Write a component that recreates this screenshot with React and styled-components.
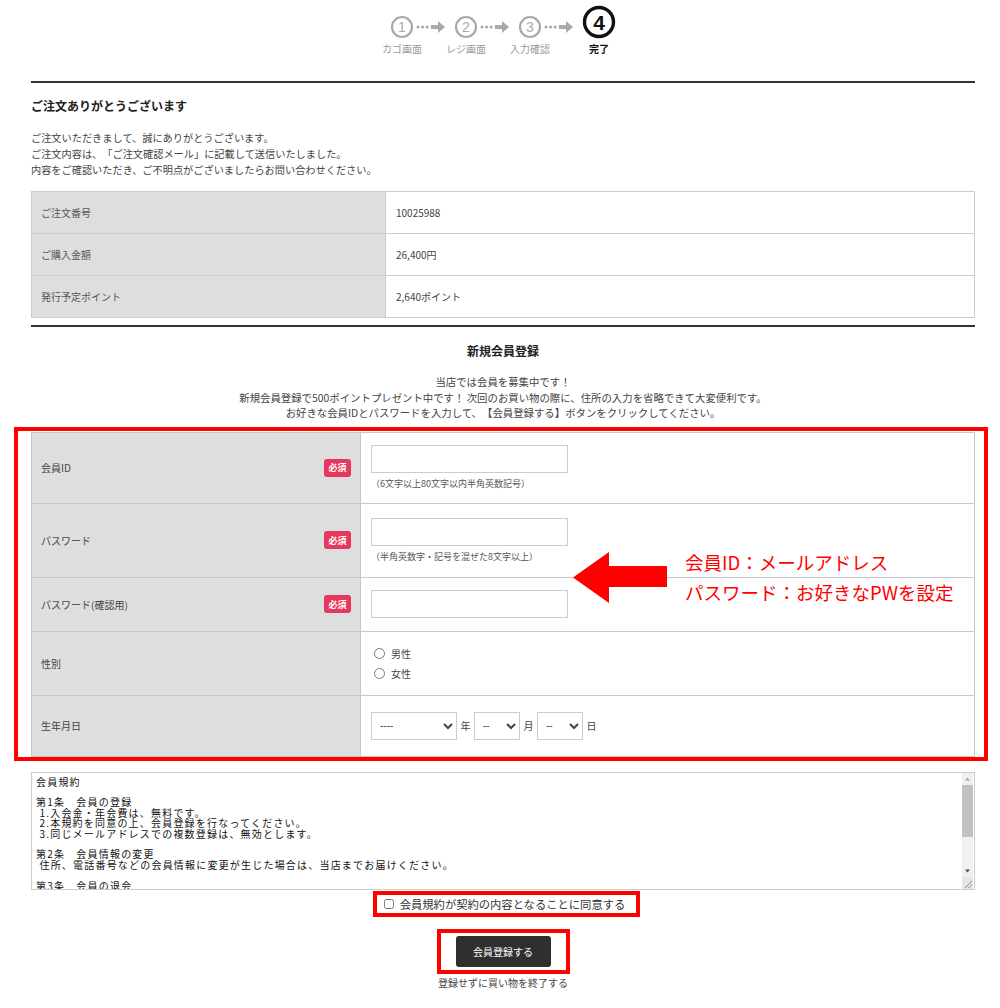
import styled, { createGlobalStyle } from "styled-components";

const GlobalStyle = createGlobalStyle`
  body {
    margin: 0;
    background: #fff;
    color: #333;
    font-family: "Noto Sans CJK JP", "Noto Sans", sans-serif;
    text-spacing-trim: space-all;
  }
`;

const steps = [
  { no: "1", label: "カゴ画面" },
  { no: "2", label: "レジ画面" },
  { no: "3", label: "入力確認" },
  { no: "4", label: "完了", active: true },
];

const orderInfo = [
  { label: "ご注文番号", value: "10025988" },
  { label: "ご購入金額", value: "26,400円" },
  { label: "発行予定ポイント", value: "2,640ポイント" },
];

const terms = `会員規約

第1条　会員の登録
 1.入会金・年会費は、無料です。
 2.本規約を同意の上、会員登録を行なってください。
 3.同じメールアドレスでの複数登録は、無効とします。

第2条　会員情報の変更
 住所、電話番号などの会員情報に変更が生じた場合は、当店までお届けください。

第3条　会員の退会
 会員が退会を希望する場合には、当店宛てにメールにて退会手続きを行ってください。退会手続きの終了後、退会となります。
`;

const StepCircle = ({ no, active }) =>
  active ? (
    <svg width="34" height="38" viewBox="0 0 34 38">
      <circle cx="17" cy="17" r="14.5" fill="none" stroke="#111" strokeWidth="3.4" />
      <text x="17" y="24.5" textAnchor="middle" fontSize="21" fontWeight="bold" fill="#111" fontFamily="Liberation Sans, sans-serif">
        {no}
      </text>
    </svg>
  ) : (
    <svg width="24" height="38" viewBox="0 0 24 38">
      <circle cx="12" cy="22" r="10" fill="none" stroke="#aaa" strokeWidth="2.2" />
      <text x="12" y="27" textAnchor="middle" fontSize="14" fill="#aaa" fontFamily="Liberation Sans, sans-serif">
        {no}
      </text>
    </svg>
  );

const Connector = () => (
  <svg width="40" height="38" viewBox="0 0 40 38">
    <circle cx="4" cy="22" r="1.6" fill="#aaa" />
    <circle cx="8.5" cy="22" r="1.6" fill="#aaa" />
    <circle cx="13" cy="22" r="1.6" fill="#aaa" />
    <path d="M17 20 H24 V16 L31 22 L24 28 V24 H17 Z" fill="#aaa" />
  </svg>
);

const App = () => {
  return (
    <>
      <GlobalStyle />
      <Page>
        <StepBar>
          {steps.map((s, i) => (
            <StepGroup key={s.no}>
              {i > 0 && <Connector />}
              <Step $active={s.active}>
                <StepCircle no={s.no} active={s.active} />
                <StepLabel $active={s.active}>{s.label}</StepLabel>
              </Step>
            </StepGroup>
          ))}
        </StepBar>

        <Rule $mt={26} />

        <Heading>ご注文ありがとうございます</Heading>
        <Lead>
          ご注文いただきまして、誠にありがとうございます。
          <br />
          ご注文内容は、「ご注文確認メール」に記載して送信いたしました。
          <br />
          内容をご確認いただき、ご不明点がございましたらお問い合わせください。
        </Lead>

        <InfoTable>
          <tbody>
            {orderInfo.map(row => (
              <tr key={row.label}>
                <InfoHead>{row.label}</InfoHead>
                <InfoCell>{row.value}</InfoCell>
              </tr>
            ))}
          </tbody>
        </InfoTable>

        <Rule $mt={7} />

        <SectionTitle>新規会員登録</SectionTitle>
        <CenterLead>
          当店では会員を募集中です！
          <br />
          新規会員登録で500ポイントプレゼント中です！ 次回のお買い物の際に、住所の入力を省略できて大変便利です。
          <br />
          お好きな会員IDとパスワードを入力して、【会員登録する】ボタンをクリックしてください。
        </CenterLead>

        <Highlight>
          <FormTable>
            <tbody>
              <FormRow $h={71}>
                <FieldLabel>
                  <LabelInner>
                    会員ID<Badge>必須</Badge>
                  </LabelInner>
                </FieldLabel>
                <FieldCell>
                  <TextInput type="text" />
                  <Hint>（6文字以上80文字以内半角英数記号）</Hint>
                </FieldCell>
              </FormRow>
              <FormRow $h={74}>
                <FieldLabel>
                  <LabelInner>
                    パスワード<Badge>必須</Badge>
                  </LabelInner>
                </FieldLabel>
                <FieldCell>
                  <TextInput type="password" />
                  <Hint>（半角英数字・記号を混ぜた8文字以上）</Hint>
                </FieldCell>
              </FormRow>
              <FormRow $h={54}>
                <FieldLabel>
                  <LabelInner>
                    パスワード(確認用)<Badge>必須</Badge>
                  </LabelInner>
                </FieldLabel>
                <FieldCell>
                  <TextInput type="password" />
                </FieldCell>
              </FormRow>
              <FormRow $h={64}>
                <FieldLabel>性別</FieldLabel>
                <FieldCell>
                  <RadioLine>
                    <Radio type="radio" name="sex" />
                    男性
                  </RadioLine>
                  <RadioLine>
                    <Radio type="radio" name="sex" />
                    女性
                  </RadioLine>
                </FieldCell>
              </FormRow>
              <FormRow $h={61}>
                <FieldLabel>生年月日</FieldLabel>
                <FieldCell>
                  <DateRow>
                    <Select $w={86}>
                      <option>----</option>
                    </Select>
                    年
                    <Select $w={46}>
                      <option>--</option>
                    </Select>
                    月
                    <Select $w={46}>
                      <option>--</option>
                    </Select>
                    日
                  </DateRow>
                </FieldCell>
              </FormRow>
            </tbody>
          </FormTable>

          <ArrowMark width="94" height="51" viewBox="0 0 94 51">
            <path d="M0 25.5 L36 0 V14 H94 V35 H36 V51 Z" fill="#f00" />
          </ArrowMark>
          <Note>
            会員ID：メールアドレス
            <br />
            パスワード：お好きなPWを設定
          </Note>
        </Highlight>

        <TermsBox>
          <Terms readOnly value={terms} />
          <ScrollTrack>
            <ScrollArrow viewBox="0 0 11 12">
              <path d="M3 7.5 L5.5 4.5 L8 7.5 Z" fill="#a3a3a3" />
            </ScrollArrow>
            <ScrollThumb />
            <ScrollSpace />
            <ScrollArrow viewBox="0 0 11 12">
              <path d="M3 4.5 L5.5 7.5 L8 4.5 Z" fill="#505050" />
            </ScrollArrow>
            <Grip viewBox="0 0 11 12">
              <path d="M3 11 L10 4 M6.5 11 L10 7.5" stroke="#888" strokeWidth="1" />
            </Grip>
          </ScrollTrack>
        </TermsBox>

        <AgreeRow>
          <AgreeBox>
            <Check type="checkbox" />
            会員規約が契約の内容となることに同意する
          </AgreeBox>
        </AgreeRow>

        <ButtonRow>
          <ButtonBox>
            <SubmitButton type="button">会員登録する</SubmitButton>
          </ButtonBox>
        </ButtonRow>

        <QuitLink>登録せずに買い物を終了する</QuitLink>
      </Page>
    </>
  );
};

const Page = styled.div`
  width: 944px;
  margin-left: 31px;
  padding: 5px 0 20px;
`;

const StepBar = styled.div`
  display: flex;
  justify-content: center;
  align-items: flex-start;
`;

const StepGroup = styled.div`
  display: flex;
  align-items: flex-start;
`;

const Step = styled.div`
  display: flex;
  flex-direction: column;
  align-items: center;
  width: ${p => (p.$active ? 34 : 24)}px;

  svg {
    display: block;
  }
`;

const StepLabel = styled.span`
  font-size: 10px;
  line-height: 12px;
  white-space: nowrap;
  color: ${p => (p.$active ? "#111" : "#9a9a9a")};
  font-weight: ${p => (p.$active ? "bold" : "normal")};
`;

const Rule = styled.div`
  margin-top: ${p => p.$mt}px;
  border-top: 2px solid #333;
`;

const Heading = styled.h2`
  margin: 14px 0 0;
  font-size: 12px;
  line-height: 18px;
  font-weight: bold;
  color: #222;
`;

const Lead = styled.p`
  margin: 15px 0 0;
  font-size: 10.2px;
  line-height: 16px;
  color: #444;
`;

const InfoTable = styled.table`
  width: 100%;
  margin-top: 13px;
  border-collapse: collapse;
  font-size: 10px;
`;

const InfoHead = styled.th`
  box-sizing: border-box;
  width: 354px;
  height: 42px;
  padding: 0 9px;
  border: 1px solid #ccc;
  background: #dedede;
  color: #555;
  font-weight: normal;
  text-align: left;
`;

const InfoCell = styled.td`
  box-sizing: border-box;
  height: 42px;
  padding: 0 10px;
  border: 1px solid #ccc;
  color: #444;
`;

const SectionTitle = styled.h2`
  margin: 15px 0 0;
  font-size: 12px;
  line-height: 18px;
  font-weight: bold;
  text-align: center;
  color: #222;
`;

const CenterLead = styled.p`
  margin: 14px 0 0;
  font-size: 10.4px;
  line-height: 15.5px;
  text-align: center;
  color: #444;
`;

const Highlight = styled.div`
  position: relative;
  margin: 6px -13px 0 -17px;
  padding: 1px 9px 0 13px;
  border: 4px solid #f00;
`;

const FormTable = styled.table`
  width: 100%;
  border-collapse: collapse;
  font-size: 10px;
`;

const FormRow = styled.tr`
  height: ${p => p.$h}px;
`;

const FieldLabel = styled.th`
  box-sizing: border-box;
  width: 329px;
  padding: 0 9px;
  border: 1px solid #c8c8c8;
  background: #dedede;
  color: #444;
  font-weight: normal;
  text-align: left;
`;

const LabelInner = styled.div`
  display: flex;
  justify-content: space-between;
  align-items: center;
`;

const Badge = styled.span`
  display: inline-flex;
  align-items: center;
  justify-content: center;
  width: 27px;
  height: 18px;
  border-radius: 3px;
  background: #e6385c;
  color: #fff;
  font-size: 9px;
  font-weight: bold;
`;

const FieldCell = styled.td`
  padding: 0 10px;
  border: 1px solid #c8c8c8;
  color: #444;
`;

const TextInput = styled.input`
  display: block;
  box-sizing: border-box;
  width: 197px;
  height: 28px;
  margin: 0;
  border: 1px solid #ccc;
  background: #fff;
`;

const Hint = styled.div`
  margin-top: 4px;
  font-size: 9px;
  line-height: 13px;
  color: #555;
`;

const RadioLine = styled.label`
  display: flex;
  align-items: center;
  height: 20px;
  font-size: 10px;
`;

const Radio = styled.input`
  width: 11px;
  height: 11px;
  margin: 0 6px 0 3px;
`;

const DateRow = styled.div`
  display: flex;
  align-items: center;
  gap: 3.5px;
  font-size: 10px;
`;

const Select = styled.select`
  box-sizing: border-box;
  width: ${p => p.$w}px;
  height: 28px;
  padding: 0 4px;
  border: 1px solid #ccc;
  border-radius: 0;
  background: #fff;
  font-size: 10px;
  color: #444;
`;

const ArrowMark = styled.svg`
  position: absolute;
  left: 555px;
  top: 121px;
`;

const Note = styled.div`
  position: absolute;
  left: 667px;
  top: 116px;
  font-size: 18.5px;
  line-height: 30px;
  color: #f00;
  white-space: nowrap;
`;

const TermsBox = styled.div`
  display: flex;
  height: 118px;
  margin-top: 11px;
  box-sizing: border-box;
  border: 1px solid #ccc;
`;

const Terms = styled.textarea`
  flex: 1;
  box-sizing: border-box;
  height: 100%;
  margin: 0;
  padding: 4px 4px;
  border: none;
  outline: none;
  font-family: "Noto Sans CJK JP", sans-serif;
  font-size: 10px;
  letter-spacing: 1.2px;
  line-height: 10.4px;
  color: #111;
  resize: none;
  overflow: hidden;
`;

const ScrollTrack = styled.div`
  display: flex;
  flex-direction: column;
  width: 11px;
  margin-right: 1px;
  background: #f0f0f0;
`;

const ScrollArrow = styled.svg`
  display: block;
  width: 11px;
  height: 12px;
`;

const ScrollThumb = styled.div`
  height: 52px;
  background: #c1c1c1;
`;

const ScrollSpace = styled.div`
  flex: 1;
`;

const Grip = styled.svg`
  display: block;
  width: 11px;
  height: 12px;
  background: #e6e6e6;
`;

const AgreeRow = styled.div`
  display: flex;
  justify-content: center;
  margin-top: 1px;
  padding-left: 7px;
`;

const AgreeBox = styled.label`
  display: flex;
  align-items: center;
  height: 18px;
  padding: 0 11px 0 7px;
  border: 4px solid #f00;
  font-size: 11.3px;
  color: #333;
`;

const Check = styled.input`
  width: 10px;
  height: 10px;
  margin: 0 6px 0 0;
`;

const ButtonRow = styled.div`
  display: flex;
  justify-content: center;
  margin-top: 12px;
`;

const ButtonBox = styled.div`
  padding: 3px 15px;
  border: 4px solid #f00;
`;

const SubmitButton = styled.button`
  display: block;
  width: 95px;
  height: 31px;
  border: none;
  border-radius: 3px;
  background: #2f2f2f;
  color: #fff;
  font-family: "Noto Sans CJK JP", sans-serif;
  font-size: 10px;
`;

const QuitLink = styled.div`
  margin-top: 2px;
  font-size: 10px;
  line-height: 14px;
  text-align: center;
  color: #444;
`;

export default App;
